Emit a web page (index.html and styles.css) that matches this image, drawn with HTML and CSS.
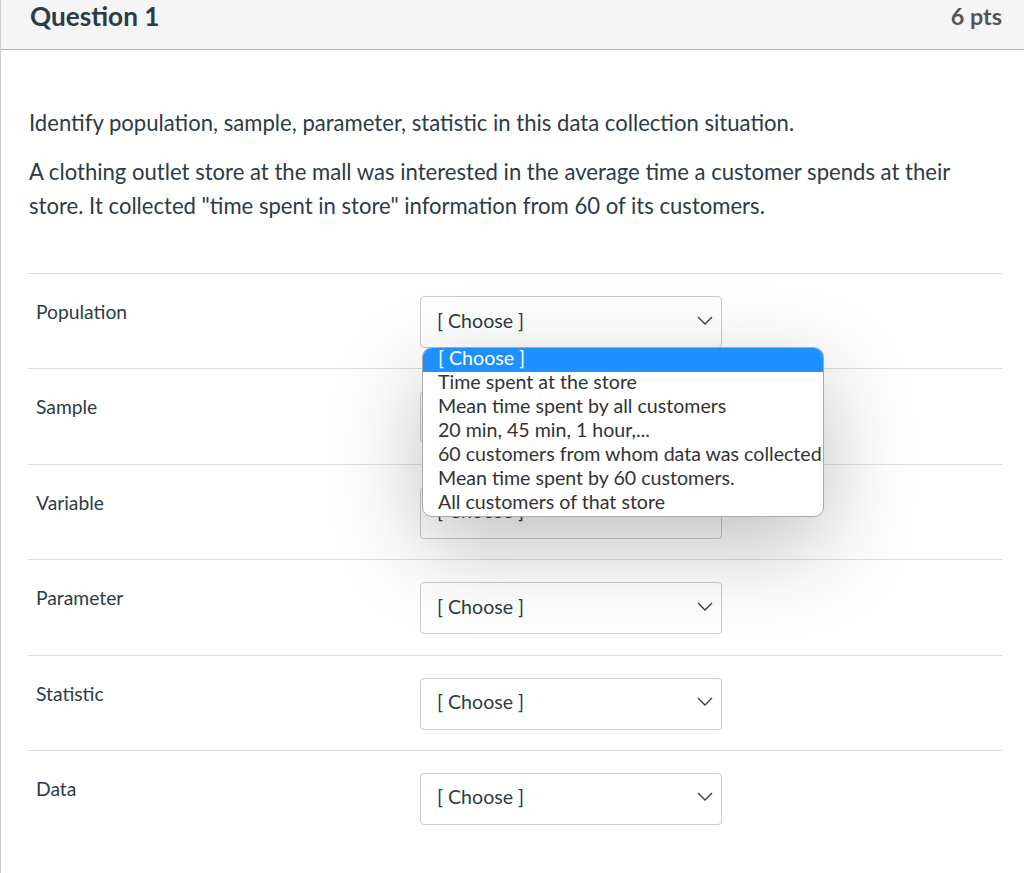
FILE: index.html
```html
<!DOCTYPE html>
<html>
<head>
<meta charset="utf-8">
<link rel="stylesheet" href="styles.css">
</head>
<body>
<div class="question">
  <div class="q-header">
    <span class="q-title">Question 1</span>
    <span class="q-pts">6 pts</span>
  </div>
  <div class="q-body">
    <p class="q-text">Identify population, sample, parameter, statistic in this data collection situation.</p>
    <p class="q-text">A clothing outlet store at the mall was interested in the average time a customer spends at their store. It collected "time spent in store" information from 60 of its customers.</p>
    <div class="answers">
      <div class="row">
        <div class="label">Population</div>
        <div class="select-wrap">
          <div class="select"><span>[ Choose ]</span><svg class="chev" width="16" height="9" viewBox="0 0 16 9"><polyline points="1,1 8,8 15,1" fill="none" stroke="#2d3b45" stroke-width="1.3"/></svg></div>
          <ul class="popup">
            <li class="sel">[ Choose ]</li>
            <li>Time spent at the store</li>
            <li>Mean time spent by all customers</li>
            <li>20 min, 45 min, 1 hour,...</li>
            <li>60 customers from whom data was collected</li>
            <li>Mean time spent by 60 customers.</li>
            <li>All customers of that store</li>
          </ul>
        </div>
      </div>
      <div class="row">
        <div class="label">Sample</div>
        <div class="select-wrap"><div class="select"><span>[ Choose ]</span><svg class="chev" width="16" height="9" viewBox="0 0 16 9"><polyline points="1,1 8,8 15,1" fill="none" stroke="#2d3b45" stroke-width="1.3"/></svg></div></div>
      </div>
      <div class="row">
        <div class="label">Variable</div>
        <div class="select-wrap"><div class="select"><span>[ Choose ]</span><svg class="chev" width="16" height="9" viewBox="0 0 16 9"><polyline points="1,1 8,8 15,1" fill="none" stroke="#2d3b45" stroke-width="1.3"/></svg></div></div>
      </div>
      <div class="row">
        <div class="label">Parameter</div>
        <div class="select-wrap"><div class="select"><span>[ Choose ]</span><svg class="chev" width="16" height="9" viewBox="0 0 16 9"><polyline points="1,1 8,8 15,1" fill="none" stroke="#2d3b45" stroke-width="1.3"/></svg></div></div>
      </div>
      <div class="row">
        <div class="label">Statistic</div>
        <div class="select-wrap"><div class="select"><span>[ Choose ]</span><svg class="chev" width="16" height="9" viewBox="0 0 16 9"><polyline points="1,1 8,8 15,1" fill="none" stroke="#2d3b45" stroke-width="1.3"/></svg></div></div>
      </div>
      <div class="row">
        <div class="label">Data</div>
        <div class="select-wrap"><div class="select"><span>[ Choose ]</span><svg class="chev" width="16" height="9" viewBox="0 0 16 9"><polyline points="1,1 8,8 15,1" fill="none" stroke="#2d3b45" stroke-width="1.3"/></svg></div></div>
      </div>
    </div>
  </div>
</div>
</body>
</html>
```
FILE: styles.css
```css
html, body {
  margin: 0;
  padding: 0;
  background: #fff;
}
body {
  font-family: Lato, "Open Sans", sans-serif;
  color: #2d3b45;
}
.question {
  border-left: 1px solid #c7cdd1;
  min-height: 873px;
  box-sizing: border-box;
}
.q-header {
  height: 49px;
  background: #f5f5f5;
  border-bottom: 1px solid #b4b8bb;
  display: flex;
  justify-content: space-between;
  align-items: flex-start;
  padding: 0 22px 0 29px;
}
.q-title {
  font-size: 26.2px;
  font-weight: 700;
  line-height: 33px;
}
.q-pts {
  font-size: 23.4px;
  font-weight: 700;
  color: #555;
  line-height: 33px;
}
.q-body {
  padding: 0 22px 0 27px;
}
.q-text {
  font-size: 22.1px;
  line-height: 34px;
  margin: 0 0 15px 0;
  padding-left: 1px;
}
.q-text:first-child {
  margin-top: 56px;
}
.answers {
  margin-top: 50px;
}
.row {
  display: flex;
  border-top: 1px solid #dadcde;
  height: 95.4px;
  box-sizing: border-box;
}
.label {
  width: 392px;
  padding-left: 8px;
  padding-top: 26px;
  font-size: 19.3px;
  box-sizing: border-box;
  flex: none;
}
.select-wrap {
  position: relative;
  padding-top: 22px;
}
.select {
  width: 302px;
  height: 52px;
  box-sizing: border-box;
  border: 1px solid #c7cdd1;
  border-radius: 4px;
  background: #fff;
  display: flex;
  align-items: center;
  justify-content: space-between;
  padding: 0 8px 4px 16px;
  font-size: 19.6px;
}
.popup {
  position: absolute;
  left: 2px;
  top: 73px;
  z-index: 10;
  margin: 0;
  padding: 0;
  list-style: none;
  width: 402px;
  box-sizing: border-box;
  background: #fff;
  border: 1px solid #a9a9a9;
  border-radius: 10px;
  overflow: hidden;
  box-shadow: 0 30px 90px rgba(0, 0, 0, 0.25);
  font-size: 19.6px;
  color: #333;
}
.popup li {
  line-height: 20px;
  padding: 0 0 4px 15px;
  white-space: nowrap;
}
.popup li.sel {
  background: #1e90ff;
  color: #fff;
}
```
